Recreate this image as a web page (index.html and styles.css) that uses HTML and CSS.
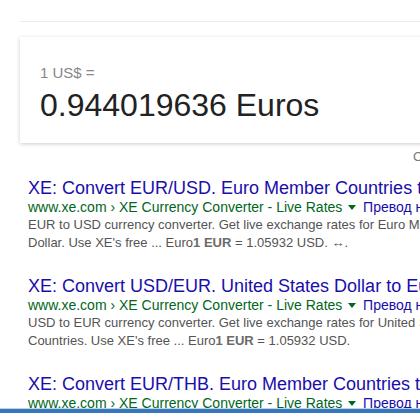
FILE: index.html
```html
<!DOCTYPE html>
<html lang="bg">
<head>
    <meta charset="UTF-8">
    <meta name="viewport" content="width=device-width, initial-scale=1.0">
    <title>1 USD to EUR</title>
    <link rel="stylesheet" href="styles.css">
</head>
<body>
    <div class="page">
        <div class="topLine"></div>

        <div class="convCard">
            <div class="convFrom">1 US$ =</div>
            <div class="convResult">0.944019636 Euros</div>
        </div>

        <div class="feedback">Сигнализиране за грешка</div>

        <div class="results">
            <div class="result">
                <a class="resultTitle" href="#">XE: Convert EUR/USD. Euro Member Countries to US Dollar</a>
                <div class="resultUrl">
                    <span class="cite">www.xe.com › XE Currency Converter - Live Rates</span>
                    <span class="arrow"></span>
                    <a class="translate" href="#">Превод на тази страница</a>
                </div>
                <div class="snippet">
                    EUR to USD currency converter. Get live exchange rates for Euro Member Countries to United States<br>
                    Dollar. Use XE's free ... Euro<b>1 EUR</b> = 1.05932 USD. ↔.
                </div>
            </div>

            <div class="result">
                <a class="resultTitle" href="#">XE: Convert USD/EUR. United States Dollar to Euro Member Countries</a>
                <div class="resultUrl">
                    <span class="cite">www.xe.com › XE Currency Converter - Live Rates</span>
                    <span class="arrow"></span>
                    <a class="translate" href="#">Превод на тази страница</a>
                </div>
                <div class="snippet">
                    USD to EUR currency converter. Get live exchange rates for United States Dollar to Euro Member<br>
                    Countries. Use XE's free ... Euro<b>1 EUR</b> = 1.05932 USD.
                </div>
            </div>

            <div class="result">
                <a class="resultTitle" href="#">XE: Convert EUR/THB. Euro Member Countries to Thailand Baht</a>
                <div class="resultUrl">
                    <span class="cite">www.xe.com › XE Currency Converter - Live Rates</span>
                    <span class="arrow"></span>
                    <a class="translate" href="#">Превод на тази страница</a>
                </div>
                <div class="snippet">
                    EUR to THB currency converter. Get live exchange rates for Euro Member Countries to Thailand Baht.
                </div>
            </div>
        </div>
    </div>

    <div class="taskbar"></div>
</body>
</html>
```

FILE: styles.css
```css
body {
    margin: 0;
    overflow: hidden;
    background-color: #fff;
    font-family: "Liberation Sans", Arial, sans-serif;
}

.page {
    width: 760px;
    padding-left: 20px;
}

.topLine {
    margin-top: 21px;
    height: 1px;
    background-color: #ebebeb;
}

.convCard {
    margin-top: 15px;
    height: 106px;
    padding: 27px 20px 0;
    box-sizing: border-box;
    background-color: #fff;
    box-shadow: 0 1px 4px rgba(0, 0, 0, 0.2);
}

.convFrom {
    font-size: 15px;
    line-height: 18px;
    color: #878787;
}

.convResult {
    margin-top: 5px;
    font-size: 32px;
    line-height: 36px;
    color: #222;
}

.feedback {
    margin-top: 6px;
    padding-left: 393px;
    font-size: 13px;
    line-height: 16px;
    color: #777;
    white-space: nowrap;
}

.results {
    margin-top: 13px;
    padding-left: 8px;
}

.result {
    margin-bottom: 24px;
    white-space: nowrap;
}

.resultTitle {
    display: block;
    font-size: 18px;
    line-height: 20px;
    color: #1a0dab;
    text-decoration: none;
}

.resultUrl {
    font-size: 14px;
    line-height: 18px;
}

.cite {
    color: #006621;
}

.arrow {
    display: inline-block;
    margin: 0 3px 2px 2px;
    border-top: 5px solid #006621;
    border-left: 4px solid transparent;
    border-right: 4px solid transparent;
    vertical-align: middle;
}

.translate {
    color: #1a0dab;
    text-decoration: none;
}

.snippet {
    font-size: 13px;
    line-height: 18px;
    color: #545454;
}

.snippet b {
    color: #6a6a6a;
}

.taskbar {
    position: fixed;
    left: 0;
    right: 0;
    bottom: 0;
    height: 4px;
    border-top: 1px solid #b9d3ee;
    background-color: #3877b9;
}
```
